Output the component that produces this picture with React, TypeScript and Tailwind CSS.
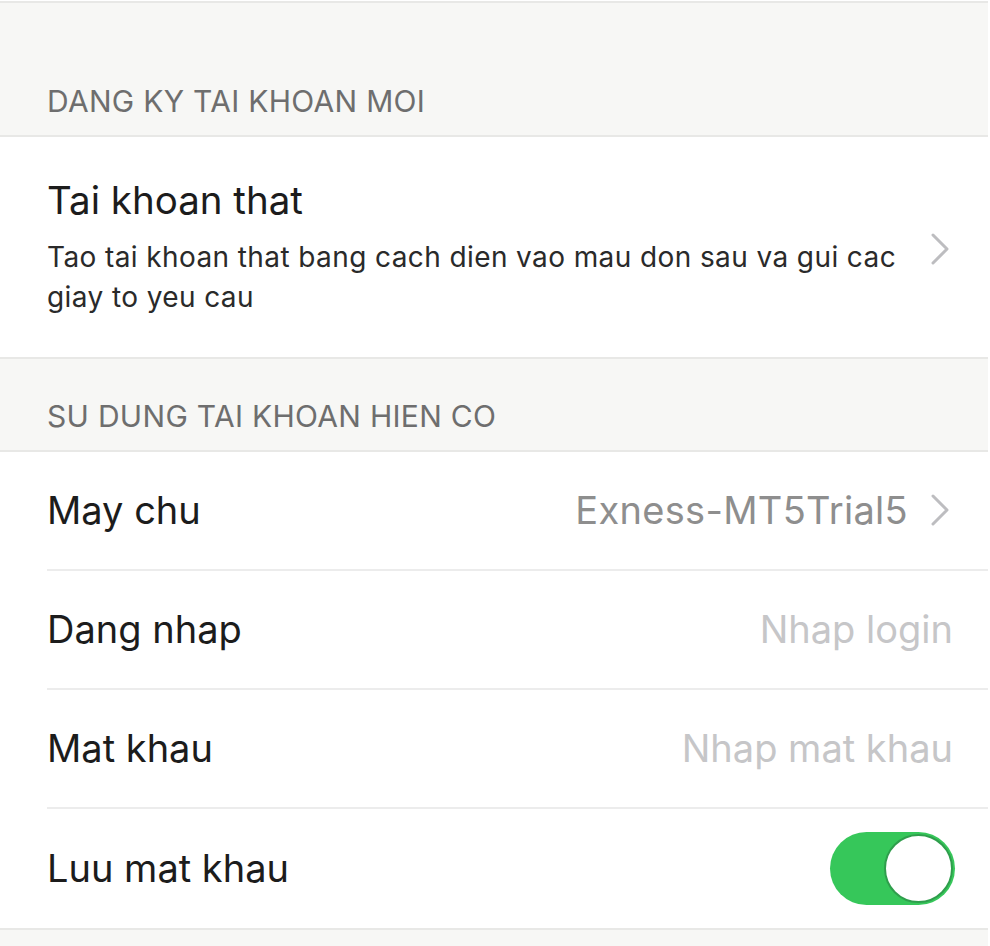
import React from "react";

const FONT = { fontFamily: "Inter, 'Liberation Sans', sans-serif" };

function Chevron() {
  return (
    <svg width="20" height="32" viewBox="0 0 20 32" fill="none" className="shrink-0">
      <path d="M3 2L17 16L3 30" stroke="#bdbdc0" strokeWidth="3" strokeLinecap="round" strokeLinejoin="round" />
    </svg>
  );
}

function SectionHeader({ title, height }: { title: string; height: string }) {
  return (
    <div className={`${height} bg-[#f7f7f5] border-y-2 border-[#e8e8e6] flex items-end px-[47px] pb-[19px]`}>
      <span className="text-[30px] leading-none text-[#6e6e6e] tracking-[0.3px]">{title}</span>
    </div>
  );
}

function Row({ label, children, last }: { label: string; children?: React.ReactNode; last?: boolean }) {
  return (
    <div className="pl-[47px]">
      <div className={`h-[119px] flex items-center justify-between pr-[35px] ${last ? "" : "border-b-2 border-[#ececec]"}`}>
        <span className="text-[38px] leading-none text-[#1c1c1c]">{label}</span>
        {children}
      </div>
    </div>
  );
}

export default function App() {
  return (
    <div className="w-[990px] h-[946px] bg-white overflow-hidden" style={FONT}>
      <div className="pt-[1px] pr-[2px]">
        <SectionHeader title="DANG KY TAI KHOAN MOI" height="h-[136px]" />

        {/* Real account */}
        <div className="flex items-center pl-[47px] pr-[38px] pt-[44px] pb-[40px]">
          <div className="flex-1">
            <div className="text-[38.5px] leading-none text-[#1c1c1c]">Tai khoan that</div>
            <div className="mt-[17px] text-[28px] leading-[40px] text-[#2a2a2a] tracking-[0.4px] w-[860px]">
              Tao tai khoan that bang cach dien vao mau don sau va gui cac giay to yeu cau
            </div>
          </div>
          <Chevron />
        </div>

        <SectionHeader title="SU DUNG TAI KHOAN HIEN CO" height="h-[95px]" />

        <Row label="May chu">
          <div className="flex items-center gap-[22px] pr-[3px]">
            <span className="text-[38px] leading-none text-[#8e8e8e] tracking-[0.3px]">Exness-MT5Trial5</span>
            <Chevron />
          </div>
        </Row>
        <Row label="Dang nhap">
          <span className="text-[38px] leading-none text-[#c6c6c8]">Nhap login</span>
        </Row>
        <Row label="Mat khau">
          <span className="text-[38px] leading-none text-[#c6c6c8]">Nhap mat khau</span>
        </Row>
        <Row label="Luu mat khau" last>
          <div className="w-[125px] h-[73px] -mr-[2px] rounded-full bg-[#36c75a] flex items-center justify-end pr-[2px]">
            <div className="w-[69px] h-[69px] rounded-full bg-white border-2 border-[#2f9e4c]" />
          </div>
        </Row>
        <div className="h-[30px] bg-[#f7f7f5] border-t-2 border-[#e8e8e6]" />
      </div>
    </div>
  );
}
